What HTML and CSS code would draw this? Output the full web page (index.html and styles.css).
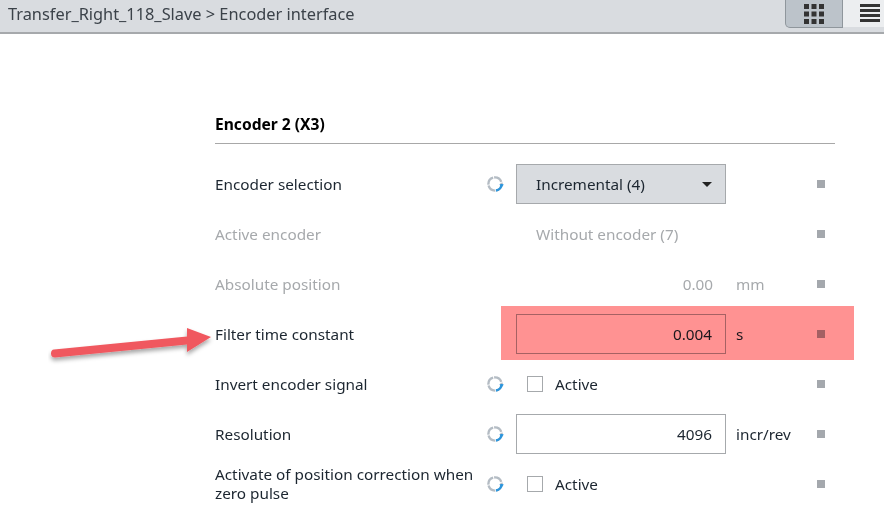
FILE: index.html
```html
<!DOCTYPE html>
<html lang="en">
<head>
<meta charset="utf-8">
<title>Encoder interface</title>
<link rel="stylesheet" href="styles.css">
</head>
<body>
<svg width="0" height="0" class="defs">
  <symbol id="spin" viewBox="0 0 18 18">
    <g fill="none" stroke-width="2.4">
      <circle cx="9" cy="9" r="6.6" stroke="#b4bcc4" stroke-dasharray="9 1"/>
      <path d="M15.6 9A6.6 6.6 0 0 1 10 15.5" stroke="#2b95dc"/>
    </g>
    <path d="M13.2 9.4h4.8l-2.4 2.6z" fill="#2b95dc"/>
  </symbol>
</svg>
<header class="topbar">
  <div class="crumb">Transfer_Right_118_Slave &gt; Encoder interface</div>
  <div class="views">
    <button class="view active" aria-label="Grid">
      <svg width="20" height="20" viewBox="0 0 20 20"><path fill="#333" d="M0 0h5v5H0zM7.500 0h5v5h-5zM15 0h5v5h-5zM0 7.500h5v5H0zM7.500 7.500h5v5h-5zM15 7.500h5v5h-5zM0 15h5v5H0zM7.500 15h5v5h-5zM15 15h5v5h-5z"/></svg>
    </button>
    <button class="view list" aria-label="List">
      <svg width="20" height="20" viewBox="0 0 20 20"><path fill="#333" d="M0 0h20v3H0zM0 5h20v3H0zM0 10h20v3H0zM0 15h20v3H0z"/></svg>
    </button>
  </div>
</header>
<main class="panel">
  <h2 class="title">Encoder 2 (X3)</h2>
  <div class="row">
    <div class="label">Encoder selection</div>
    <svg class="spinner"><use href="#spin"/></svg>
    <div class="control select"><span>Incremental (4)</span><i class="caret"></i></div>
    <div class="unit"></div><i class="dot"></i>
  </div>
  <div class="row off">
    <div class="label">Active encoder</div>
    <span class="nospin"></span>
    <div class="control plain">Without encoder (7)</div>
    <div class="unit"></div><i class="dot"></i>
  </div>
  <div class="row off">
    <div class="label">Absolute position</div>
    <span class="nospin"></span>
    <div class="control value">0.00</div>
    <div class="unit">mm</div><i class="dot"></i>
  </div>
  <div class="row">
    <div class="label">Filter time constant</div>
    <span class="nospin"></span>
    <div class="control input">0.004</div>
    <div class="unit">s</div><i class="dot"></i>
  </div>
  <div class="row">
    <div class="label">Invert encoder signal</div>
    <svg class="spinner"><use href="#spin"/></svg>
    <div class="control check"><i class="box"></i>Active</div>
    <div class="unit"></div><i class="dot"></i>
  </div>
  <div class="row">
    <div class="label">Resolution</div>
    <svg class="spinner"><use href="#spin"/></svg>
    <div class="control input">4096</div>
    <div class="unit">incr/rev</div><i class="dot"></i>
  </div>
  <div class="row">
    <div class="label">Activate of position correction when zero pulse</div>
    <svg class="spinner"><use href="#spin"/></svg>
    <div class="control check"><i class="box"></i>Active</div>
    <div class="unit"></div><i class="dot"></i>
  </div>
</main>
<div class="highlight"></div>
<svg class="arrow" width="190" height="50" viewBox="0 0 190 50">
  <defs><filter id="sh" x="-10%" y="-30%" width="120%" height="170%"><feDropShadow dx="0" dy="3" stdDeviation="2" flood-color="#000" flood-opacity=".35"/></filter></defs>
  <path filter="url(#sh)" fill="#f0585f" d="M6 24.500 L139 11.500 L139 3 L163 12 L139 27 L139 19.500 L7 32.500 Q3 32.500 3 28.500 Q3 24.800 6 24.500Z"/>
</svg>
</body>
</html>
```
FILE: styles.css
```css
* { box-sizing: border-box; }
html, body { margin: 0; height: 100%; overflow: hidden; }
body { background: #fff; font-family: "Noto Sans", "Open Sans", sans-serif; font-size: 15.300px; color: #1c2630; position: relative; }
.defs { position: absolute; }
.topbar { height: 34px; background: #d9dce0; border-bottom: 2px solid #a6a9ac; display: flex; justify-content: space-between; padding-left: 8px; }
.crumb { font-size: 16.350px; line-height: 29px; color: #3b4249; }
.views { display: flex; }
.view { border: 0; padding: 0; background: #eceef0; display: flex; align-items: center; justify-content: center; height: 28px; width: 41px; }
.view.list { padding-left: 13px; height: 27px; }
.view.active { width: 58px; background: #bcc3ca; border: 1px solid #8f969c; border-top: 0; border-radius: 0 0 0 5px; }
.panel { width: 620px; margin: 76px 0 0 215px; }
.title { margin: 0; height: 34px; font-size: 15.600px; line-height: 28px; font-weight: 700; color: #000; border-bottom: 1px solid #a8a8a8; }
.row { height: 50px; display: flex; align-items: center; }
.title + .row { margin-top: 15px; }
.label { width: 270px; line-height: 19px; }
.spinner { width: 18px; height: 18px; margin-left: 1px; margin-right: 12px; flex: none; }
.nospin { width: 31px; flex: none; }
.control { width: 210px; height: 40px; flex: none; display: flex; align-items: center; }
.select { background: #d9dce0; border: 1px solid #a6a9ac; padding: 0 13px 0 19px; justify-content: space-between; }
.caret { width: 0; height: 0; border: 5.500px solid transparent; border-top: 5.500px solid #222; border-bottom: 0; }
.plain { padding-left: 20px; }
.value, .input { justify-content: flex-end; padding-right: 13px; }
.input { background: #fff; border: 1px solid #a6a9ac; }
.check { padding-left: 11px; }
.box { width: 16px; height: 16px; border: 1px solid #a6a9ac; background: #fff; margin-right: 12px; }
.unit { width: 91px; padding-left: 10px; flex: none; }
.dot { width: 8px; height: 8px; background: #a4a8ad; }
.off { color: #a6a9ac; }
.highlight { position: absolute; left: 501px; top: 306px; width: 353px; height: 54px; background: #ff9292; mix-blend-mode: multiply; }
.arrow { position: absolute; left: 48px; top: 325px; }
```
